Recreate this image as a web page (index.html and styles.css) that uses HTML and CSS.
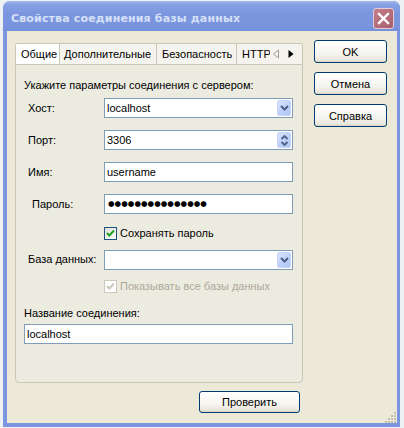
FILE: index.html
```html
<!DOCTYPE html>
<html lang="ru">
<head>
<meta charset="utf-8">
<title>Свойства соединения базы данных</title>
<link rel="stylesheet" href="styles.css">
</head>
<body>
<div class="window">
  <div class="titlebar">
    <span class="title">Свойства соединения базы данных</span>
    <div class="close">
      <svg width="19" height="19" viewBox="0 0 19 19"><path d="M5 5 L14 14 M14 5 L5 14" stroke="#fff" stroke-width="2.4" stroke-linecap="square"/></svg>
    </div>
  </div>
  <div class="client">
    <div class="main">
      <div class="tabs">
        <div class="tabstrip">
          <div class="tab active">Общие</div>
          <div class="tab t2">Дополнительные</div>
          <div class="tab t3">Безопасность</div>
          <div class="tab t4">HTTP</div>
          <div class="scroller">
            <svg width="8" height="10" viewBox="0 0 8 10"><path d="M6.5 1 L1.5 5 L6.5 9 Z" fill="none" stroke="#9c9c94" stroke-width="1"/></svg>
            <svg width="8" height="10" viewBox="0 0 8 10"><path d="M1.5 1 L6.5 5 L1.5 9 Z" fill="#000"/></svg>
          </div>
        </div>
        <div class="panel">
          <div class="heading">Укажите параметры соединения с сервером:</div>
          <div class="form">
            <div class="lbl">Хост:</div>
            <div class="field"><span class="val">localhost</span><span class="dropbtn"><svg width="9" height="6" viewBox="0 0 9 6"><path d="M1 1 L4.5 4.5 L8 1" fill="none" stroke="#4d6185" stroke-width="2"/></svg></span></div>

            <div class="lbl">Порт:</div>
            <div class="field"><span class="val">3306</span><span class="dropbtn spin"><svg width="9" height="5" viewBox="0 0 9 5"><path d="M1.5 4 L4.5 1 L7.5 4" fill="none" stroke="#4d6185" stroke-width="1.8"/></svg><svg width="9" height="5" viewBox="0 0 9 5"><path d="M1.5 1 L4.5 4 L7.5 1" fill="none" stroke="#4d6185" stroke-width="1.8"/></svg></span></div>

            <div class="lbl">Имя:</div>
            <div class="field"><span class="val">username</span></div>

            <div class="lbl lbl-pad">Пароль:</div>
            <div class="field"><span class="val pwd">●●●●●●●●●●●●●●●</span></div>

            <div></div>
            <div class="check"><span class="cb"><svg width="11" height="11" viewBox="0 0 11 11"><path d="M2 5 L4.3 7.5 L9 2.5" fill="none" stroke="#21a121" stroke-width="2"/></svg></span><span>Сохранять пароль</span></div>

            <div class="lbl">База данных:</div>
            <div class="field"><span class="val"></span><span class="dropbtn"><svg width="9" height="6" viewBox="0 0 9 6"><path d="M1 1 L4.5 4.5 L8 1" fill="none" stroke="#4d6185" stroke-width="2"/></svg></span></div>

            <div></div>
            <div class="check disabled"><span class="cb"><svg width="11" height="11" viewBox="0 0 11 11"><path d="M2 5 L4.3 7.5 L9 2.5" fill="none" stroke="#c9c7ba" stroke-width="2"/></svg></span><span>Показывать все базы данных</span></div>
          </div>
          <div class="name-label">Название соединения:</div>
          <div class="field wide"><span class="val">localhost</span></div>
        </div>
      </div>
      <div class="bottom"><button class="btn btn-test">Проверить</button></div>
    </div>
    <div class="side">
      <button class="btn">OK</button>
      <button class="btn">Отмена</button>
      <button class="btn">Справка</button>
    </div>
    <div class="grip">
      <svg width="12" height="12" viewBox="0 0 12 12">
        <g fill="#c2bfae">
          <rect x="9" y="1" width="2" height="2"/>
          <rect x="6" y="4" width="2" height="2"/><rect x="9" y="4" width="2" height="2"/>
          <rect x="3" y="7" width="2" height="2"/><rect x="6" y="7" width="2" height="2"/><rect x="9" y="7" width="2" height="2"/>
          <rect x="0" y="10" width="2" height="2"/><rect x="3" y="10" width="2" height="2"/><rect x="6" y="10" width="2" height="2"/><rect x="9" y="10" width="2" height="2"/>
        </g>
      </svg>
    </div>
  </div>
</div>
</body>
</html>
```
FILE: styles.css
```css
html, body {
  margin: 0;
  padding: 0;
}
body {
  width: 404px;
  height: 428px;
  overflow: hidden;
  background: #eef0f2;
  font-family: "Liberation Sans", Arial, sans-serif;
  font-size: 11px;
  color: #000;
}
.window {
  margin: 1px 0 0 3px;
  width: 397px;
  height: 426px;
  background: #7b96df;
  border-radius: 7px 7px 0 0;
  display: flex;
  flex-direction: column;
}
.titlebar {
  height: 30px;
  flex: none;
  display: flex;
  align-items: flex-start;
  padding: 0 6px 0 8px;
  background: linear-gradient(#a4b8ee, #86a0e3 12%, #7b96df 45%, #7a95de 85%, #7590db);
  border-radius: 7px 7px 0 0;
}
.title {
  flex: 1;
  margin-top: 10px;
  line-height: 16px;
  font-family: "DejaVu Sans", sans-serif;
  font-weight: bold;
  font-size: 11px;
  color: #d6e0f6;
  letter-spacing: 0.15px;
}
.close {
  margin-top: 7px;
  width: 21px;
  height: 21px;
  box-sizing: border-box;
  border: 1px solid #e2ccd6;
  border-radius: 3px;
  background: linear-gradient(135deg, #c47f8c, #b56a78 60%, #a95e6d);
  display: flex;
  align-items: center;
  justify-content: center;
}
.client {
  flex: 1;
  margin: 0 3px 4px 4px;
  background: #ece9d8;
  display: flex;
  align-items: flex-start;
  padding: 9px 0 0 8px;
  position: relative;
}
.main {
  width: 288px;
  padding-top: 3px;
  display: flex;
  flex-direction: column;
}
.tabs {
  height: 340px;
  display: flex;
  flex-direction: column;
}
.tabstrip {
  height: 21px;
  flex: none;
  display: flex;
  box-sizing: border-box;
  border: 1px solid #c9c7b6;
  border-bottom: none;
  border-radius: 3px 3px 0 0;
  background: #f4f3ee;
  overflow: hidden;
}
.tab {
  box-sizing: border-box;
  padding: 3px 0 0 5px;
  line-height: 15px;
  white-space: nowrap;
  overflow: hidden;
  color: #000;
}
.tab.active {
  width: 44px;
  background: #fff;
  border-right: 1px solid #c9c7b6;
}
.tab.t2 {
  width: 97px;
  border-right: 1px solid #c9c7b6;
  padding-left: 4px;
}
.tab.t3 {
  width: 80px;
  border-right: 1px solid #c9c7b6;
  padding-left: 5px;
}
.tab.t4 {
  flex: 1;
}
.scroller {
  width: 30px;
  flex: none;
  display: flex;
  align-items: center;
  gap: 7px;
  padding-left: 2px;
  background: #f4f3ee;
}
.panel {
  flex: 1;
  border: 1px solid #c9c7b6;
  border-radius: 0 0 4px 4px;
  background: #ecebe0;
  padding: 14px 8px 0 8px;
}
.heading {
  line-height: 13px;
  height: 13px;
}
.form {
  display: grid;
  grid-template-columns: 76px 189px;
  grid-template-rows: 32px 32px 32px 32px 26px 27px 27px;
  align-items: center;
  margin-left: 4px;
}
.lbl {
  line-height: 13px;
}
.lbl-pad {
  padding-left: 4px;
}
.field {
  height: 20px;
  box-sizing: border-box;
  border: 1px solid #7f9db9;
  background: #fff;
  display: flex;
  align-items: stretch;
}
.field .val {
  flex: 1;
  padding-left: 2px;
  line-height: 18px;
  white-space: nowrap;
  overflow: hidden;
}
.pwd {
  font-family: "DejaVu Sans", sans-serif;
  font-size: 7.5px;
  letter-spacing: 0.05px;
  padding-left: 3px !important;
}
.dropbtn {
  width: 14px;
  margin: 1px 1px 1px 0;
  box-sizing: border-box;
  border: 1px solid #c7d6f8;
  border-radius: 2px;
  background: linear-gradient(135deg, #d9e4fd, #bccffa 60%, #b1c7f7);
  display: flex;
  align-items: center;
  justify-content: center;
}
.dropbtn.spin {
  flex-direction: column;
  gap: 1px;
}
.check {
  display: flex;
  align-items: center;
  gap: 3px;
  line-height: 13px;
}
.cb {
  width: 13px;
  height: 13px;
  box-sizing: border-box;
  border: 1px solid #1c5180;
  background: linear-gradient(135deg, #dcdcd7, #fff);
  display: flex;
  align-items: center;
  justify-content: center;
}
.check.disabled {
  color: #aca899;
}
.check.disabled .cb {
  border-color: #cac8bb;
  background: #fff;
}
.name-label {
  margin-top: 7px;
  line-height: 13px;
}
.field.wide {
  margin-top: 4px;
  width: 269px;
}
.bottom {
  display: flex;
  justify-content: flex-end;
  padding-right: 3px;
  margin-top: 8px;
}
.btn {
  box-sizing: border-box;
  height: 23px;
  width: 73px;
  border: 1px solid #003c74;
  border-radius: 3px;
  background: linear-gradient(#ffffff, #f5f4ef 60%, #e9e7dd 90%, #d8d3c6);
  font-family: "Liberation Sans", Arial, sans-serif;
  font-size: 11px;
  color: #000;
  padding: 0;
}
.btn-test {
  width: 101px;
  height: 22px;
}
.side {
  margin-left: 11px;
  display: flex;
  flex-direction: column;
  gap: 9px;
}
.grip {
  position: absolute;
  right: 0;
  bottom: 0;
  width: 12px;
  height: 12px;
}
```
